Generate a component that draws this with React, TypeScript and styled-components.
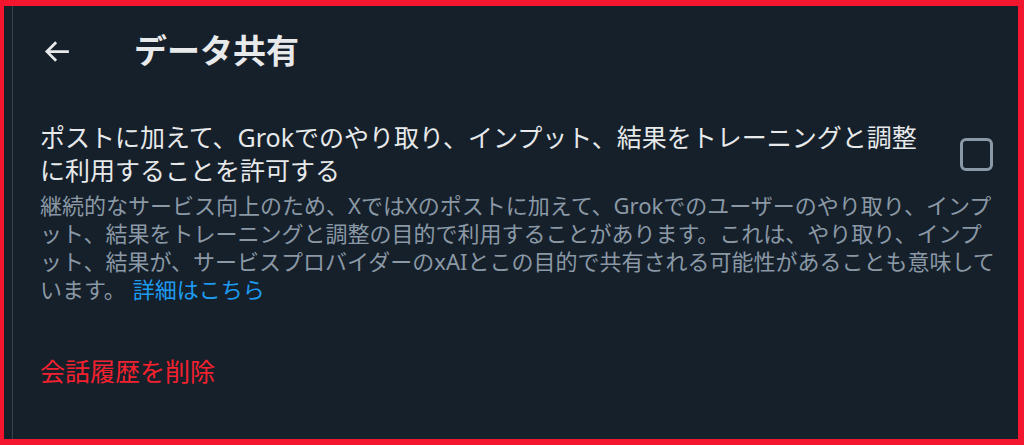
import styled, { createGlobalStyle } from 'styled-components';

const GlobalStyle = createGlobalStyle`
  html,
  body {
    margin: 0;
    padding: 0;
    background: #15202b;
  }

  body {
    font-family: 'Noto Sans', 'Noto Sans CJK JP', sans-serif;
    color: #e7e9ea;
  }
`;

const Frame = styled.div`
  box-sizing: border-box;
  width: 1024px;
  height: 445px;
  border-style: solid;
  border-color: #f4162e;
  border-width: 6px 6px 6px 4px;
  background: #15202b;
  display: flex;
`;

const Column = styled.main`
  flex: 1;
  margin-left: 8px;
  border-left: 1px solid #38444d;
  display: flex;
  flex-direction: column;
`;

const Header = styled.header`
  height: 90px;
  display: flex;
  align-items: center;
  gap: 61px;
  padding-left: 27px;
`;

const BackButton = styled.button`
  width: 33px;
  height: 33px;
  padding: 0;
  border: none;
  background: transparent;
  color: #e7e9ea;
  display: flex;
  align-items: center;
  justify-content: center;
  cursor: pointer;

  svg {
    width: 33px;
    height: 33px;
    fill: currentColor;
  }
`;

const Title = styled.h1`
  margin: 0;
  font-size: 33px;
  line-height: 40px;
  font-weight: 700;
  color: #e7e9ea;
`;

const Section = styled.section`
  padding: 25px 20px 0 27px;
  display: flex;
  flex-direction: column;
`;

const SettingRow = styled.label`
  display: flex;
  align-items: center;
  justify-content: space-between;
  gap: 20px;
  padding-right: 5px;
  cursor: pointer;
`;

const SettingLabel = styled.span`
  flex: 1;
  font-size: 25px;
  line-height: 33px;
  color: #e7e9ea;
`;

const Checkbox = styled.span<{ checked: boolean }>`
  box-sizing: border-box;
  flex: none;
  width: 33px;
  height: 33px;
  border: 3px solid #8b98a5;
  border-radius: 6px;
  background: ${({ checked }) => (checked ? '#1d9bf0' : 'transparent')};
`;

const Description = styled.p`
  margin: 4px 0 0;
  font-size: 22px;
  line-height: 28px;
  color: #8b98a5;
`;

const Link = styled.a`
  margin-left: 7px;
  color: #1d9bf0;
  text-decoration: none;
`;

const DangerAction = styled.button`
  align-self: flex-start;
  margin-top: 52px;
  padding: 0;
  border: none;
  background: transparent;
  font-family: inherit;
  font-size: 25px;
  line-height: 33px;
  color: #f4212e;
  cursor: pointer;
`;

const App = () => {
  return (
    <>
      <GlobalStyle />
      <Frame>
        <Column>
          <Header>
            <BackButton aria-label="戻る">
              <svg viewBox="0 0 24 24">
                <path d="M7.414 13l5.043 5.04-1.414 1.42L3.586 12l7.457-7.46 1.414 1.42L7.414 11H21v2H7.414z" />
              </svg>
            </BackButton>
            <Title>データ共有</Title>
          </Header>
          <Section>
            <SettingRow>
              <SettingLabel>
                ポストに加えて、Grokでのやり取り、インプット、結果をトレーニングと調整に利用することを許可する
              </SettingLabel>
              <Checkbox checked={false} />
            </SettingRow>
            <Description>
              継続的なサービス向上のため、XではXのポストに加えて、Grokでのユーザーのやり取り、インプット、結果をトレーニングと調整の目的で利用することがあります。これは、やり取り、インプット、結果が、サービスプロバイダーのxAIとこの目的で共有される可能性があることも意味しています。
              <Link href="#">詳細はこちら</Link>
            </Description>
            <DangerAction>会話履歴を削除</DangerAction>
          </Section>
        </Column>
      </Frame>
    </>
  );
};

export default App;
